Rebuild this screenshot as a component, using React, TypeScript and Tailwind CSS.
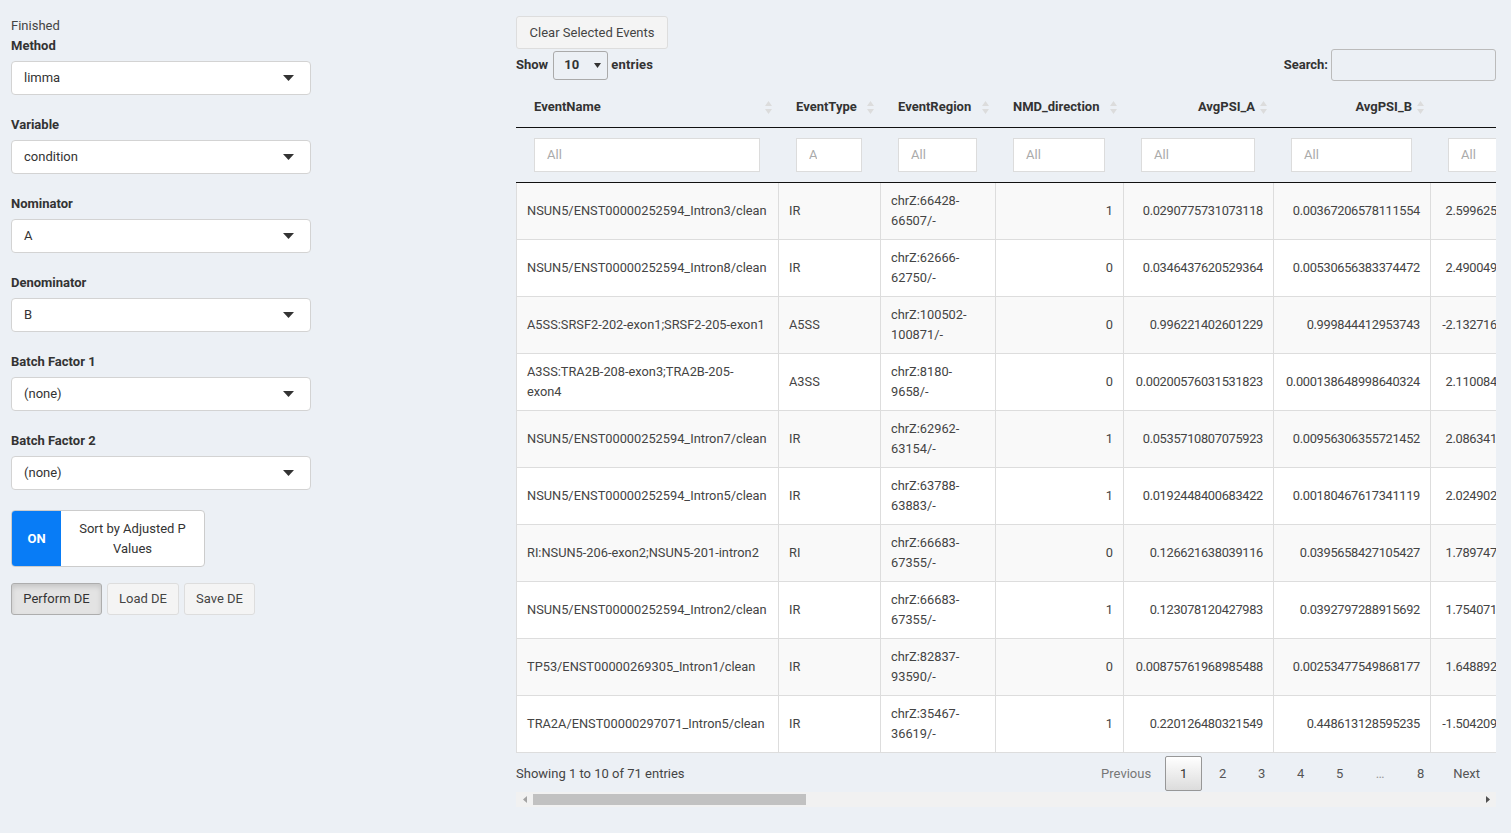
import React from "react";

type Row = {
  name: React.ReactNode;
  type: string;
  r1: string;
  r2: string;
  nmd: string;
  a: string;
  b: string;
  fc: string;
  p: string;
};

const rows: Row[] = [
  { name: "NSUN5/ENST00000252594_Intron3/clean", type: "IR", r1: "chrZ:66428-", r2: "66507/-", nmd: "1", a: "0.0290775731073118", b: "0.00367206578111554", fc: "2.59962504857312", p: "0.00000218" },
  { name: "NSUN5/ENST00000252594_Intron8/clean", type: "IR", r1: "chrZ:62666-", r2: "62750/-", nmd: "0", a: "0.0346437620529364", b: "0.00530656383374472", fc: "2.49004918273645", p: "0.00000412" },
  { name: "A5SS:SRSF2-202-exon1;SRSF2-205-exon1", type: "A5SS", r1: "chrZ:100502-", r2: "100871/-", nmd: "0", a: "0.996221402601229", b: "0.999844412953743", fc: "-2.13271622814567", p: "0.00000531" },
  { name: (<>A3SS:TRA2B-208-exon3;TRA2B-205-<br />exon4</>), type: "A3SS", r1: "chrZ:8180-", r2: "9658/-", nmd: "0", a: "0.00200576031531823", b: "0.000138648998640324", fc: "2.11008437261548", p: "0.00000722" },
  { name: "NSUN5/ENST00000252594_Intron7/clean", type: "IR", r1: "chrZ:62962-", r2: "63154/-", nmd: "1", a: "0.0535710807075923", b: "0.00956306355721452", fc: "2.08634127364512", p: "0.00001013" },
  { name: "NSUN5/ENST00000252594_Intron5/clean", type: "IR", r1: "chrZ:63788-", r2: "63883/-", nmd: "1", a: "0.0192448400683422", b: "0.00180467617341119", fc: "2.02490218374651", p: "0.00001345" },
  { name: "RI:NSUN5-206-exon2;NSUN5-201-intron2", type: "RI", r1: "chrZ:66683-", r2: "67355/-", nmd: "0", a: "0.126621638039116", b: "0.0395658427105427", fc: "1.78974736251846", p: "0.00002871" },
  { name: "NSUN5/ENST00000252594_Intron2/clean", type: "IR", r1: "chrZ:66683-", r2: "67355/-", nmd: "1", a: "0.123078120427983", b: "0.0392797288915692", fc: "1.75407129384756", p: "0.00003102" },
  { name: "TP53/ENST00000269305_Intron1/clean", type: "IR", r1: "chrZ:82837-", r2: "93590/-", nmd: "0", a: "0.00875761968985488", b: "0.00253477549868177", fc: "1.64889263548172", p: "0.00004518" },
  { name: "TRA2A/ENST00000297071_Intron5/clean", type: "IR", r1: "chrZ:35467-", r2: "36619/-", nmd: "1", a: "0.220126480321549", b: "0.448613128595235", fc: "-1.50420938475612", p: "0.00005790" },
];

function Caret() {
  return (
    <svg width="11" height="6" viewBox="0 0 11 6">
      <path d="M0 0 H11 L5.5 6 Z" fill="#333" />
    </svg>
  );
}

function SortIcon() {
  return (
    <svg width="7" height="13" viewBox="0 0 7 13" className="shrink-0">
      <path d="M3.5 0 L7 5 H0 Z" fill="#dcdcdc" />
      <path d="M0 8 H7 L3.5 13 Z" fill="#dcdcdc" />
    </svg>
  );
}

function SelectField({ label, value }: { label: string; value: string }) {
  return (
    <div className="flex flex-col">
      <div className="h-[20px] leading-[20px] font-bold text-[13px] text-[#333]">{label}</div>
      <div className="mt-[5px] h-[34px] w-[300px] bg-white border border-[#d3d3d3] rounded-[4px] flex items-center pl-[12px] pr-[16px] text-[13px] text-[#333]">
        <span className="flex-1">{value}</span>
        <Caret />
      </div>
    </div>
  );
}

function HeadCell({ label, right }: { label: string; right?: boolean }) {
  return (
    <th className="p-0 py-[10px] font-bold text-[13px] text-[#333] border-b border-[#111] align-middle">
      <div className="flex items-center pl-[18px] pr-[6px] leading-[20px]">
        <span className={right ? "flex-1 text-right pr-[5px] whitespace-nowrap" : "flex-1 text-left whitespace-nowrap"}>{label}</span>
        <SortIcon />
      </div>
    </th>
  );
}

function FilterCell({ narrow }: { narrow?: boolean }) {
  return (
    <th className="px-[18px] py-[10px] border-b border-[#111] font-normal">
      <div className="h-[34px] bg-white border border-[#dcdcdc] flex items-center pl-[12px] text-[13px] text-[#aaa] overflow-hidden">
        {narrow ? <div className="w-[8px] overflow-hidden whitespace-nowrap">All</div> : <span className="whitespace-nowrap">All</span>}
      </div>
    </th>
  );
}

export default function App() {
  const pages = ["2", "3", "4", "5"];
  return (
    <div className="min-h-screen w-full bg-[#ecf0f5] text-[#333] font-['Roboto',sans-serif] flex">
      {/* Sidebar */}
      <aside className="w-[516px] shrink-0 pl-[11px] pt-[16px] flex flex-col">
        <div className="h-[20px] leading-[20px] text-[13px] text-[#444]">Finished</div>
        <div className="flex flex-col gap-[20px]">
          <SelectField label="Method" value="limma" />
          <SelectField label="Variable" value="condition" />
          <SelectField label="Nominator" value="A" />
          <SelectField label="Denominator" value="B" />
          <SelectField label="Batch Factor 1" value="(none)" />
          <SelectField label="Batch Factor 2" value="(none)" />
        </div>
        <div className="mt-[20px] w-[194px] h-[57px] flex border border-[#ccc] rounded-[4px] overflow-hidden bg-white">
          <div className="w-[49px] bg-[#087cf6] text-white font-bold text-[13px] flex items-center justify-center">ON</div>
          <div className="flex-1 flex items-center justify-center text-center text-[13px] leading-[20px] text-[#333] px-[8px]">
            Sort by Adjusted P Values
          </div>
        </div>
        <div className="mt-[16px] flex gap-[5px]">
          <div className="h-[32px] w-[91px] flex items-center justify-center bg-[#e3e3e3] border border-[#adadad] rounded-[3px] shadow-[inset_0_3px_5px_rgba(0,0,0,0.125)] text-[13px] text-[#333]">Perform DE</div>
          <div className="h-[32px] w-[72px] flex items-center justify-center bg-[#f4f4f4] border border-[#ddd] rounded-[3px] text-[13px] text-[#444]">Load DE</div>
          <div className="h-[32px] w-[71px] flex items-center justify-center bg-[#f4f4f4] border border-[#ddd] rounded-[3px] text-[13px] text-[#444]">Save DE</div>
        </div>
      </aside>

      {/* Main */}
      <main className="w-[980px] shrink-0 pt-[16px] flex flex-col">
        <div className="h-[33px] w-[152px] flex items-center justify-center bg-[#f4f4f4] border border-[#ddd] rounded-[3px] text-[13px] text-[#444]">
          Clear Selected Events
        </div>
        <div className="h-[32px] flex items-center text-[13px]">
          <span className="font-bold">Show</span>
          <div className="ml-[5px] h-[29px] w-[55px] border border-[#aaa] rounded-[3px] flex items-center pl-[10px] pr-[6px] font-bold">
            <span className="flex-1">10</span>
            <svg width="7" height="5" viewBox="0 0 7 5"><path d="M0 0 H7 L3.5 5 Z" fill="#333" /></svg>
          </div>
          <span className="ml-[3px] font-bold tracking-[0.2px]">entries</span>
          <span className="ml-auto font-bold">Search:</span>
          <div className="ml-[3px] h-[32px] w-[165px] border border-[#bbb] rounded-[3px]" />
        </div>

        <div className="mt-[6px] w-[980px] overflow-hidden">
          <table className="table-fixed border-separate border-spacing-0 w-[1336px]">
            <colgroup>
              <col className="w-[262px]" />
              <col className="w-[102px]" />
              <col className="w-[115px]" />
              <col className="w-[128px]" />
              <col className="w-[150px]" />
              <col className="w-[157px]" />
              <col className="w-[132px]" />
              <col className="w-[290px]" />
            </colgroup>
            <thead>
              <tr>
                <HeadCell label="EventName" />
                <HeadCell label="EventType" />
                <HeadCell label="EventRegion" />
                <HeadCell label="NMD_direction" />
                <HeadCell label="AvgPSI_A" right />
                <HeadCell label="AvgPSI_B" right />
                <HeadCell label="logFC" right />
                <HeadCell label="P.Value" right />
              </tr>
              <tr>
                <FilterCell />
                <FilterCell narrow />
                <FilterCell />
                <FilterCell />
                <FilterCell />
                <FilterCell />
                <FilterCell />
                <FilterCell />
              </tr>
            </thead>
            <tbody className="text-[12.8px] text-[#444] leading-[20px]">
              {rows.map((r, i) => {
                const bg = i % 2 === 0 ? "bg-[#f9f9f9]" : "bg-white";
                const top = i === 0 ? "" : "border-t border-[#ddd]";
                const bottom = i === rows.length - 1 ? "border-b border-[#111]" : "";
                const cell = `${bg} ${top} ${bottom} border-l border-[#ddd] px-[10px] py-[8px] align-middle`;
                const num = `${cell} text-right whitespace-nowrap tracking-[-0.3px]`;
                return (
                  <tr key={i}>
                    <td className={`${cell} whitespace-nowrap`}>{r.name}</td>
                    <td className={cell}>{r.type}</td>
                    <td className={`${cell} whitespace-nowrap`}>{r.r1}<br />{r.r2}</td>
                    <td className={`${cell} text-right`}>{r.nmd}</td>
                    <td className={num}>{r.a}</td>
                    <td className={num}>{r.b}</td>
                    <td className={num}>{r.fc}</td>
                    <td className={num}>{r.p}</td>
                  </tr>
                );
              })}
            </tbody>
          </table>
        </div>

        <div className="mt-[3px] h-[35px] flex items-center text-[13px]">
          <span className="text-[#444]">Showing 1 to 10 of 71 entries</span>
          <div className="ml-auto flex items-center gap-[2px] text-[#555] pr-[4px]">
            <div className="h-[35px] px-[12px] flex items-center text-[#777]">Previous</div>
            <div className="h-[35px] w-[37px] flex items-center justify-center border border-[#979797] rounded-[2px] bg-gradient-to-b from-white to-[#dcdcdc] text-[#333]">1</div>
            {pages.map((p) => (
              <div key={p} className="h-[35px] w-[37px] flex items-center justify-center">{p}</div>
            ))}
            <div className="h-[35px] w-[40px] flex items-center justify-center text-[#999]">…</div>
            <div className="h-[35px] w-[37px] flex items-center justify-center">8</div>
            <div className="h-[35px] px-[12px] flex items-center">Next</div>
          </div>
        </div>

        <div className="mt-[1px] h-[15px] w-[980px] bg-[#f1f1f1] flex items-center">
          <div className="w-[17px] flex justify-center">
            <svg width="4" height="7" viewBox="0 0 4 7"><path d="M4 0 V7 L0 3.5 Z" fill="#a3a3a3" /></svg>
          </div>
          <div className="h-[11px] w-[273px] bg-[#c1c1c1]" />
          <div className="ml-auto w-[17px] flex justify-center">
            <svg width="4" height="7" viewBox="0 0 4 7"><path d="M0 0 V7 L4 3.5 Z" fill="#505050" /></svg>
          </div>
        </div>
      </main>
    </div>
  );
}
